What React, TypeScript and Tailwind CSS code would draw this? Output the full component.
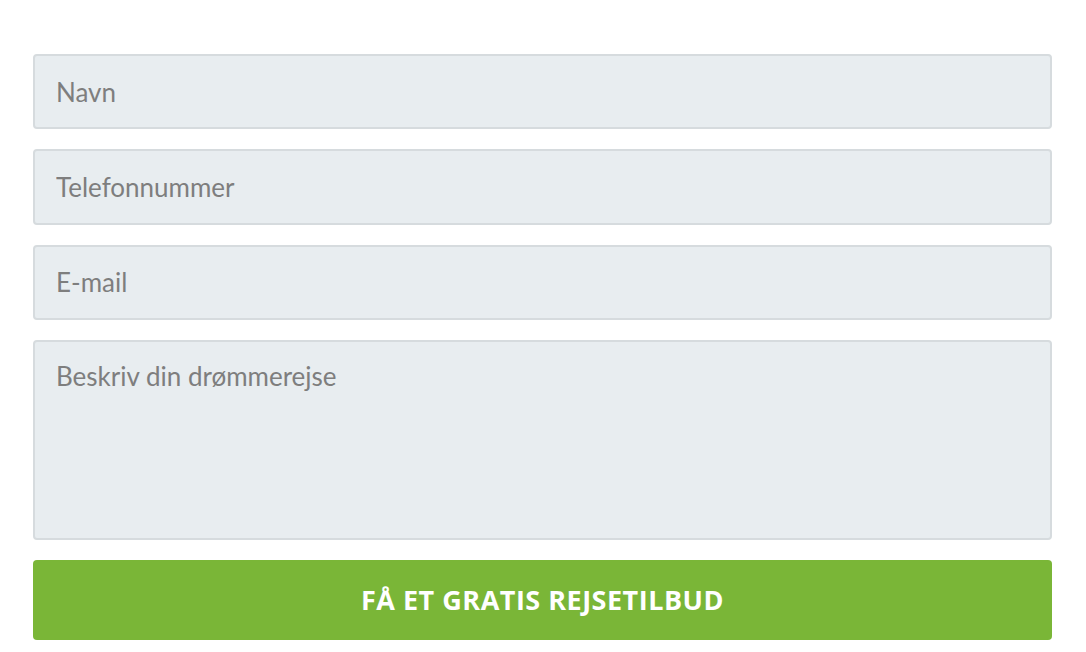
import React from 'react';

const fieldClass =
  "h-[75.33px] w-full rounded-[4px] border-2 border-[#d6dbde] bg-[#e8edf0] px-[21px] text-[26px] text-[#555] placeholder:text-[#7e7e7e] outline-none font-['Lato',sans-serif]";

export default function App() {
  return (
    <div className="w-[1086px] h-[652px] bg-white pt-[54px] pl-[33px]">
      <form className="w-[1019px] flex flex-col gap-[20px]" onSubmit={(e) => e.preventDefault()}>
        <input type="text" placeholder="Navn" className={fieldClass} />
        <input type="text" placeholder="Telefonnummer" className={fieldClass} />
        <input type="email" placeholder="E-mail" className={fieldClass} />
        <textarea
          placeholder="Beskriv din drømmerejse"
          className="h-[200px] w-full resize-none rounded-[4px] border-2 border-[#d6dbde] bg-[#e8edf0] px-[21px] pt-[19px] text-[26px] leading-[30px] text-[#555] placeholder:text-[#7e7e7e] outline-none font-['Lato',sans-serif]"
        />
        <button
          type="submit"
          className="h-[80px] w-full rounded-[4px] bg-[#7ab637] text-white text-[27px] tracking-[0.5px] font-bold uppercase font-['Open_Sans',sans-serif]"
        >
          Få et gratis rejsetilbud
        </button>
      </form>
    </div>
  );
}
